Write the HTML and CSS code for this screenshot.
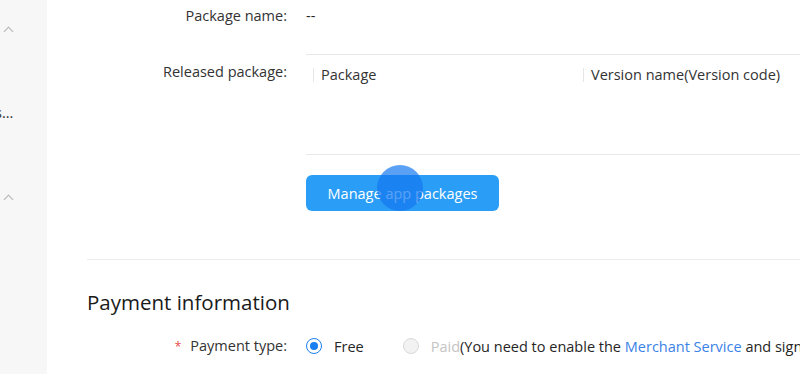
FILE: index.html
```html
<!DOCTYPE html>
<html lang="en">
<head>
    <meta charset="UTF-8">
    <meta name="viewport" content="width=device-width, initial-scale=1.0">
    <title>App information</title>
    <link rel="stylesheet" href="styles.css">
</head>
<body>
    <div class="page">
        <aside class="sidebar">
            <div class="side-group">
                <span class="chevron"></span>
            </div>
            <div class="side-item">s...</div>
            <div class="side-group second">
                <span class="chevron"></span>
            </div>
        </aside>

        <main class="main">
            <div class="form-row first">
                <label class="form-label">Package name:</label>
                <div class="form-value">--</div>
            </div>

            <div class="form-row">
                <label class="form-label released">Released package:</label>
                <div class="form-value">
                    <div class="pkg-table">
                        <div class="pkg-head">
                            <div class="pkg-col name">Package</div>
                            <div class="pkg-col version">Version name(Version code)</div>
                        </div>
                        <div class="pkg-body"></div>
                    </div>
                    <button class="btn-primary">
                        Manage app packages
                        <span class="touch-dot"></span>
                    </button>
                </div>
            </div>

            <hr class="divider">

            <h2 class="section-title">Payment information</h2>

            <div class="form-row">
                <label class="form-label"><span class="required">*</span>Payment type:</label>
                <div class="form-value radios">
                    <span class="radio checked"></span>
                    <span class="radio-text">Free</span>
                    <span class="radio disabled"></span>
                    <span class="radio-text"><span class="muted">Paid</span>(You need to enable the <a class="link">Merchant Service</a> and sign the agreement first)</span>
                </div>
            </div>
        </main>
    </div>
</body>
</html>
```

FILE: styles.css
```css
body {
    margin: 0;
    font-family: "Open Sans", "Noto Sans", sans-serif;
    font-size: 14.5px;
    color: #262626;
    background: white;
}
.page {
    display: flex;
    height: 374px;
    overflow: hidden;
}
.sidebar {
    width: 47px;
    flex-shrink: 0;
    background: #f7f7f7;
    overflow: hidden;
}
.side-group {
    height: 24px;
    margin-top: 18px;
    position: relative;
}
.side-group.second {
    margin-top: 63px;
}
.chevron {
    position: absolute;
    left: 5px;
    top: 10px;
    width: 6px;
    height: 6px;
    border-left: 1px solid #b5b5b5;
    border-top: 1px solid #b5b5b5;
    transform: rotate(45deg);
}
.side-item {
    margin-top: 61px;
    margin-left: -5px;
    line-height: 20px;
    color: #333;
    white-space: nowrap;
}
.main {
    flex: 1;
    padding-left: 40px;
    min-width: 0;
}
.form-row {
    display: flex;
    gap: 19px;
}
.form-row.first {
    line-height: 32px;
    margin-bottom: 22px;
}
.form-label {
    width: 200px;
    flex-shrink: 0;
    text-align: right;
    color: #333;
    line-height: 32px;
    white-space: nowrap;
}
.form-label.released {
    line-height: 36px;
}
.form-value {
    flex: 1;
    min-width: 0;
    white-space: nowrap;
}
.pkg-table {
    border-top: 1px solid #e8e8e8;
    border-bottom: 1px solid #e8e8e8;
    height: 99px;
}
.pkg-head {
    display: flex;
    height: 39px;
    align-items: center;
}
.pkg-col {
    position: relative;
    padding-left: 15px;
    color: #333;
}
.pkg-col::before {
    content: "";
    position: absolute;
    left: 7px;
    top: 3px;
    width: 1px;
    height: 14px;
    background: #e6e6e6;
}
.pkg-col.name {
    width: 255px;
}
.btn-primary {
    position: relative;
    margin-top: 20px;
    height: 36px;
    width: 193px;
    border: none;
    border-radius: 6px;
    background: #2a9ef6;
    color: white;
    font-family: inherit;
    font-size: 14.5px;
    padding: 0;
}
.touch-dot {
    position: absolute;
    left: 71px;
    top: -10px;
    width: 46px;
    height: 46px;
    border-radius: 50%;
    background: rgba(20, 120, 240, 0.7);
}
.divider {
    border: none;
    border-top: 1px solid #ececec;
    margin: 48px 0 0;
}
.section-title {
    margin: 28px 0 0;
    font-size: 20.5px;
    font-weight: normal;
    line-height: 28px;
    color: #1a1a1a;
}
.section-title + .form-row {
    margin-top: 14px;
}
.required {
    color: #e84a4a;
    margin-right: 9px;
    font-size: 12px;
}
.radios {
    display: flex;
    align-items: center;
    height: 32px;
}
.radio {
    width: 14px;
    height: 14px;
    border-radius: 50%;
    border: 1px solid #d9d9d9;
    position: relative;
    flex-shrink: 0;
}
.radio.checked {
    border-color: #1a7ff0;
}
.radio.checked::after {
    content: "";
    position: absolute;
    left: 3px;
    top: 3px;
    width: 8px;
    height: 8px;
    border-radius: 50%;
    background: #1a7ff0;
}
.radio.disabled {
    background: #f2f2f2;
}
.radio-text {
    margin-left: 12px;
    margin-right: 39px;
}
.muted {
    color: #c4c4c4;
}
.link {
    color: #3b82e6;
}
```
